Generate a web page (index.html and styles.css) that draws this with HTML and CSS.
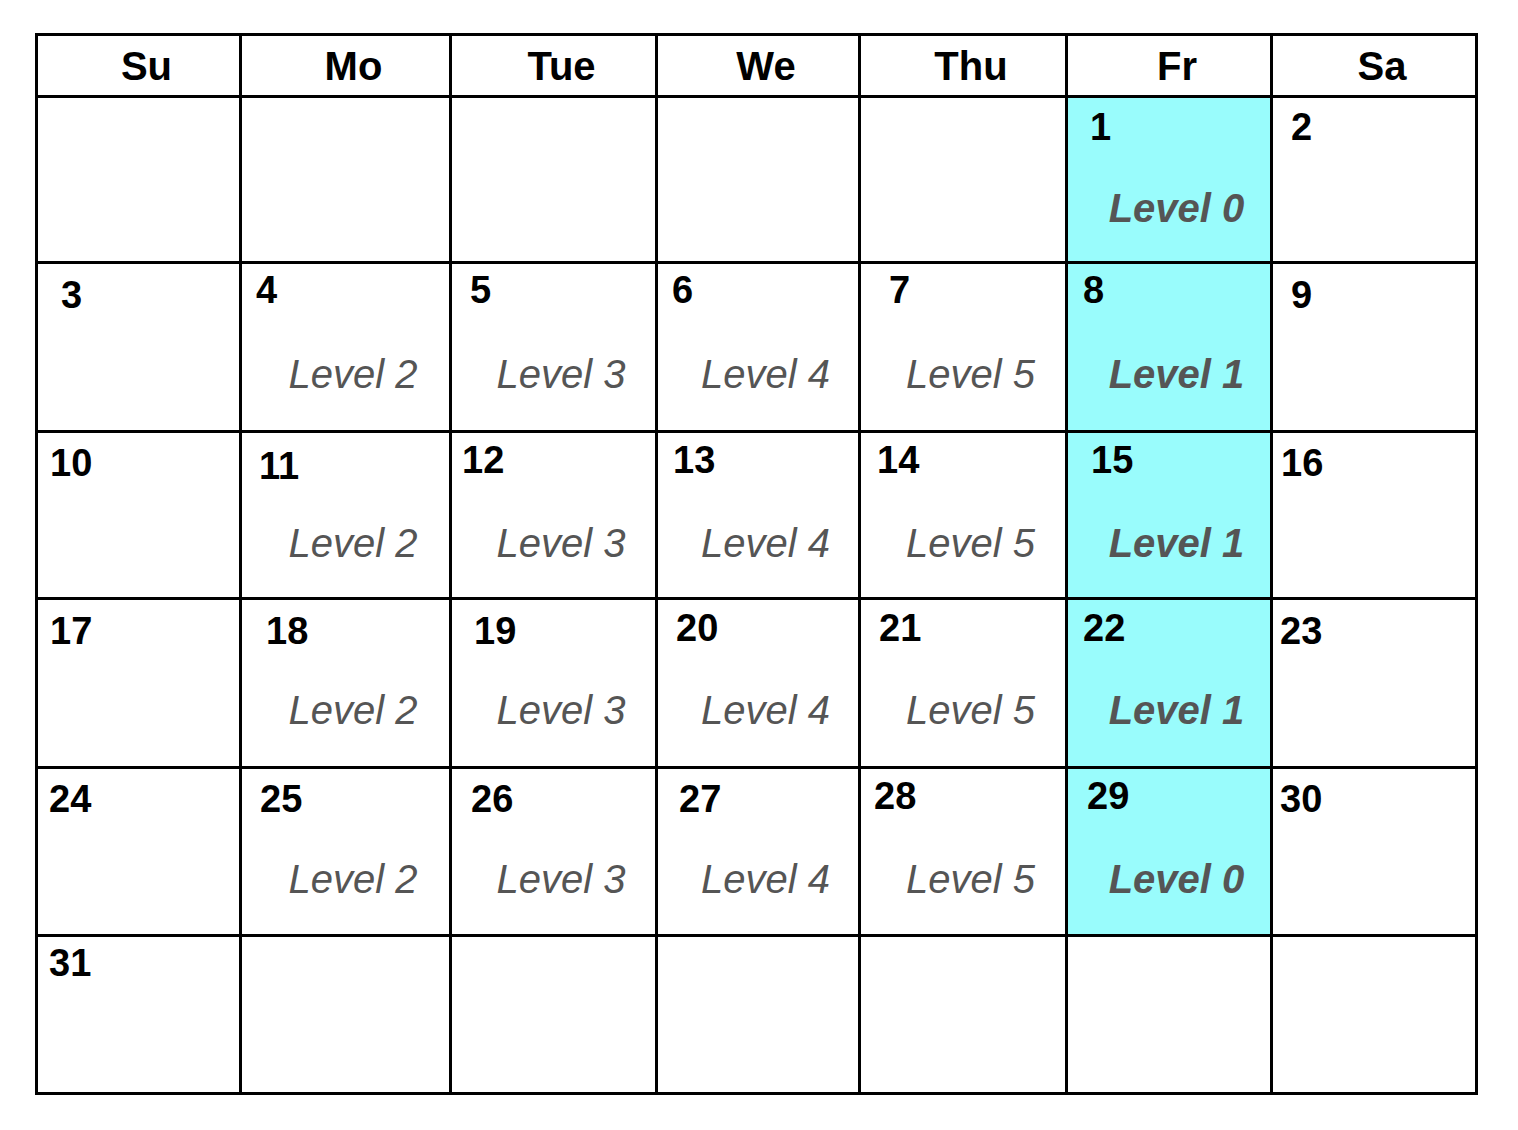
FILE: index.html
```html
<!DOCTYPE html>
<html>
<head>
<meta charset="utf-8">
<link rel="stylesheet" href="styles.css">
</head>
<body>
<div class="cal">
  <div class="head">Su</div>
  <div class="head">Mo</div>
  <div class="head">Tue</div>
  <div class="head">We</div>
  <div class="head">Thu</div>
  <div class="head">Fr</div>
  <div class="head">Sa</div>

  <div class="cell"></div>
  <div class="cell"></div>
  <div class="cell"></div>
  <div class="cell"></div>
  <div class="cell"></div>
  <div class="cell fri" style="--x:22px;--y:7px"><span class="num">1</span><span class="lvl">Level 0</span></div>
  <div class="cell" style="--x:18px;--y:7px"><span class="num">2</span></div>

  <div class="cell" style="--x:23px;--y:9px"><span class="num">3</span></div>
  <div class="cell" style="--x:14px;--y:4px"><span class="num">4</span><span class="lvl">Level 2</span></div>
  <div class="cell" style="--x:18px;--y:4px"><span class="num">5</span><span class="lvl">Level 3</span></div>
  <div class="cell" style="--x:14px;--y:4px"><span class="num">6</span><span class="lvl">Level 4</span></div>
  <div class="cell" style="--x:28px;--y:4px"><span class="num">7</span><span class="lvl">Level 5</span></div>
  <div class="cell fri" style="--x:15px;--y:4px"><span class="num">8</span><span class="lvl">Level 1</span></div>
  <div class="cell" style="--x:18px;--y:9px"><span class="num">9</span></div>

  <div class="cell" style="--x:12px;--y:8px"><span class="num">10</span></div>
  <div class="cell" style="--x:17px;--y:11px"><span class="num">11</span><span class="lvl">Level 2</span></div>
  <div class="cell" style="--x:10px;--y:5px"><span class="num">12</span><span class="lvl">Level 3</span></div>
  <div class="cell" style="--x:15px;--y:5px"><span class="num">13</span><span class="lvl">Level 4</span></div>
  <div class="cell" style="--x:16px;--y:5px"><span class="num">14</span><span class="lvl">Level 5</span></div>
  <div class="cell fri" style="--x:23px;--y:5px"><span class="num">15</span><span class="lvl">Level 1</span></div>
  <div class="cell" style="--x:8px;--y:8px"><span class="num">16</span></div>

  <div class="cell" style="--x:12px;--y:9px"><span class="num">17</span></div>
  <div class="cell" style="--x:24px;--y:9px"><span class="num">18</span><span class="lvl">Level 2</span></div>
  <div class="cell" style="--x:22px;--y:9px"><span class="num">19</span><span class="lvl">Level 3</span></div>
  <div class="cell" style="--x:18px;--y:6px"><span class="num">20</span><span class="lvl">Level 4</span></div>
  <div class="cell" style="--x:18px;--y:6px"><span class="num">21</span><span class="lvl">Level 5</span></div>
  <div class="cell fri" style="--x:15px;--y:6px"><span class="num">22</span><span class="lvl">Level 1</span></div>
  <div class="cell" style="--x:7px;--y:9px"><span class="num">23</span></div>

  <div class="cell" style="--x:11px;--y:8px"><span class="num">24</span></div>
  <div class="cell" style="--x:18px;--y:8px"><span class="num">25</span><span class="lvl">Level 2</span></div>
  <div class="cell" style="--x:19px;--y:8px"><span class="num">26</span><span class="lvl">Level 3</span></div>
  <div class="cell" style="--x:21px;--y:8px"><span class="num">27</span><span class="lvl">Level 4</span></div>
  <div class="cell" style="--x:13px;--y:5px"><span class="num">28</span><span class="lvl">Level 5</span></div>
  <div class="cell fri" style="--x:19px;--y:5px"><span class="num">29</span><span class="lvl">Level 0</span></div>
  <div class="cell" style="--x:7px;--y:8px"><span class="num">30</span></div>

  <div class="cell" style="--x:11px;--y:4px"><span class="num">31</span></div>
  <div class="cell"></div>
  <div class="cell"></div>
  <div class="cell"></div>
  <div class="cell"></div>
  <div class="cell"></div>
  <div class="cell"></div>
</div>
</body>
</html>
```
FILE: styles.css
```css
html, body {
  margin: 0;
  padding: 0;
  background: #ffffff;
}

body {
  font-family: "Liberation Sans", Arial, Helvetica, sans-serif;
  color: #000000;
}

.cal {
  display: grid;
  grid-template-columns: 201px 207px 203px 200px 204px 202px 202px;
  grid-template-rows: 59px 163px 166px 164px 166px 165px 155px;
  gap: 3px;
  padding: 3px;
  background: #000000;
  width: max-content;
  margin: 33px 0 0 35px;
}

.head {
  background: #ffffff;
  display: flex;
  align-items: center;
  justify-content: center;
  padding-left: 16px;
  font-size: 40px;
  line-height: 40px;
  font-weight: bold;
}

.cell {
  background: #ffffff;
  display: flex;
  flex-direction: column;
  --x: 16px;
  --y: 6px;
}

.cell.fri {
  background: #99fcfc;
}

.num {
  display: block;
  box-sizing: border-box;
  height: 90px;
  padding: calc(var(--y) + 3px) 0 0 var(--x);
  font-size: 38px;
  line-height: 38px;
  font-weight: bold;
}

.lvl {
  display: block;
  text-align: center;
  padding-left: 15px;
  font-size: 40px;
  line-height: 40px;
  font-style: italic;
  color: #555555;
}

.fri .lvl {
  font-weight: bold;
}
```
